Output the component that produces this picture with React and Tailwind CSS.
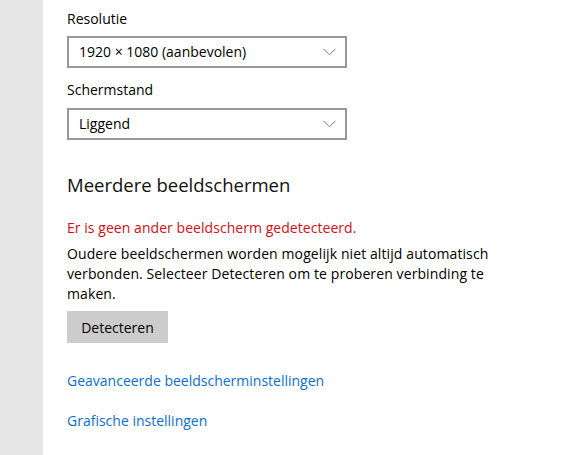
import { useState } from 'react';

const font = { fontFamily: '"Open Sans", "Noto Sans", sans-serif' };

function Chevron() {
  return (
    <svg width="13" height="8" viewBox="0 0 13 8" fill="none" className="shrink-0">
      <path d="M0.5 0.8 L6.5 6.8 L12.5 0.8" stroke="#7a7a7a" strokeWidth="1" />
    </svg>
  );
}

function Dropdown({ value }) {
  return (
    <div className="flex h-8 w-[280px] items-center justify-between border-2 border-[#999999] bg-white pl-[10px] pr-[9px]">
      <span className="text-[14px] leading-5 text-black">{value}</span>
      <Chevron />
    </div>
  );
}

export default function App() {
  const [res] = useState('1920 × 1080 (aanbevolen)');

  return (
    <div className="flex h-[455px] w-[580px] overflow-hidden bg-white" style={font}>
      <div className="w-[43px] shrink-0 bg-[#e6e6e6]" />
      <div className="flex flex-col pl-6 pt-[9px]">
        <div className="text-[14px] leading-5 text-black">Resolutie</div>
        <div className="mt-[7px]">
          <Dropdown value={res} />
        </div>
        <div className="mt-3 text-[14px] leading-5 text-black">Schermstand</div>
        <div className="mt-2">
          <Dropdown value="Liggend" />
        </div>

        <h2 className="mt-[31px] text-[18.5px] font-normal leading-7 text-[#111]">
          Meerdere beeldschermen
        </h2>

        <p className="mt-[19px] text-[14px] leading-5 tracking-[0.05px] text-[#d10f17]">
          Er is geen ander beeldscherm gedetecteerd.
        </p>
        <p className="mt-[6px] w-[445px] text-[14px] leading-5 tracking-[0.1px] text-black">
          Oudere beeldschermen worden mogelijk niet altijd automatisch verbonden. Selecteer
          Detecteren om te proberen verbinding te maken.
        </p>

        <button className="mt-[7px] h-8 w-[101px] bg-[#cccccc] text-[14px] text-black">
          Detecteren
        </button>

        <a className="mt-[28px] text-[14px] leading-5 text-[#0a6fcf]">
          Geavanceerde beeldscherminstellingen
        </a>
        <a className="mt-5 text-[14px] leading-5 text-[#0a6fcf]">Grafische instellingen</a>
      </div>
    </div>
  );
}
